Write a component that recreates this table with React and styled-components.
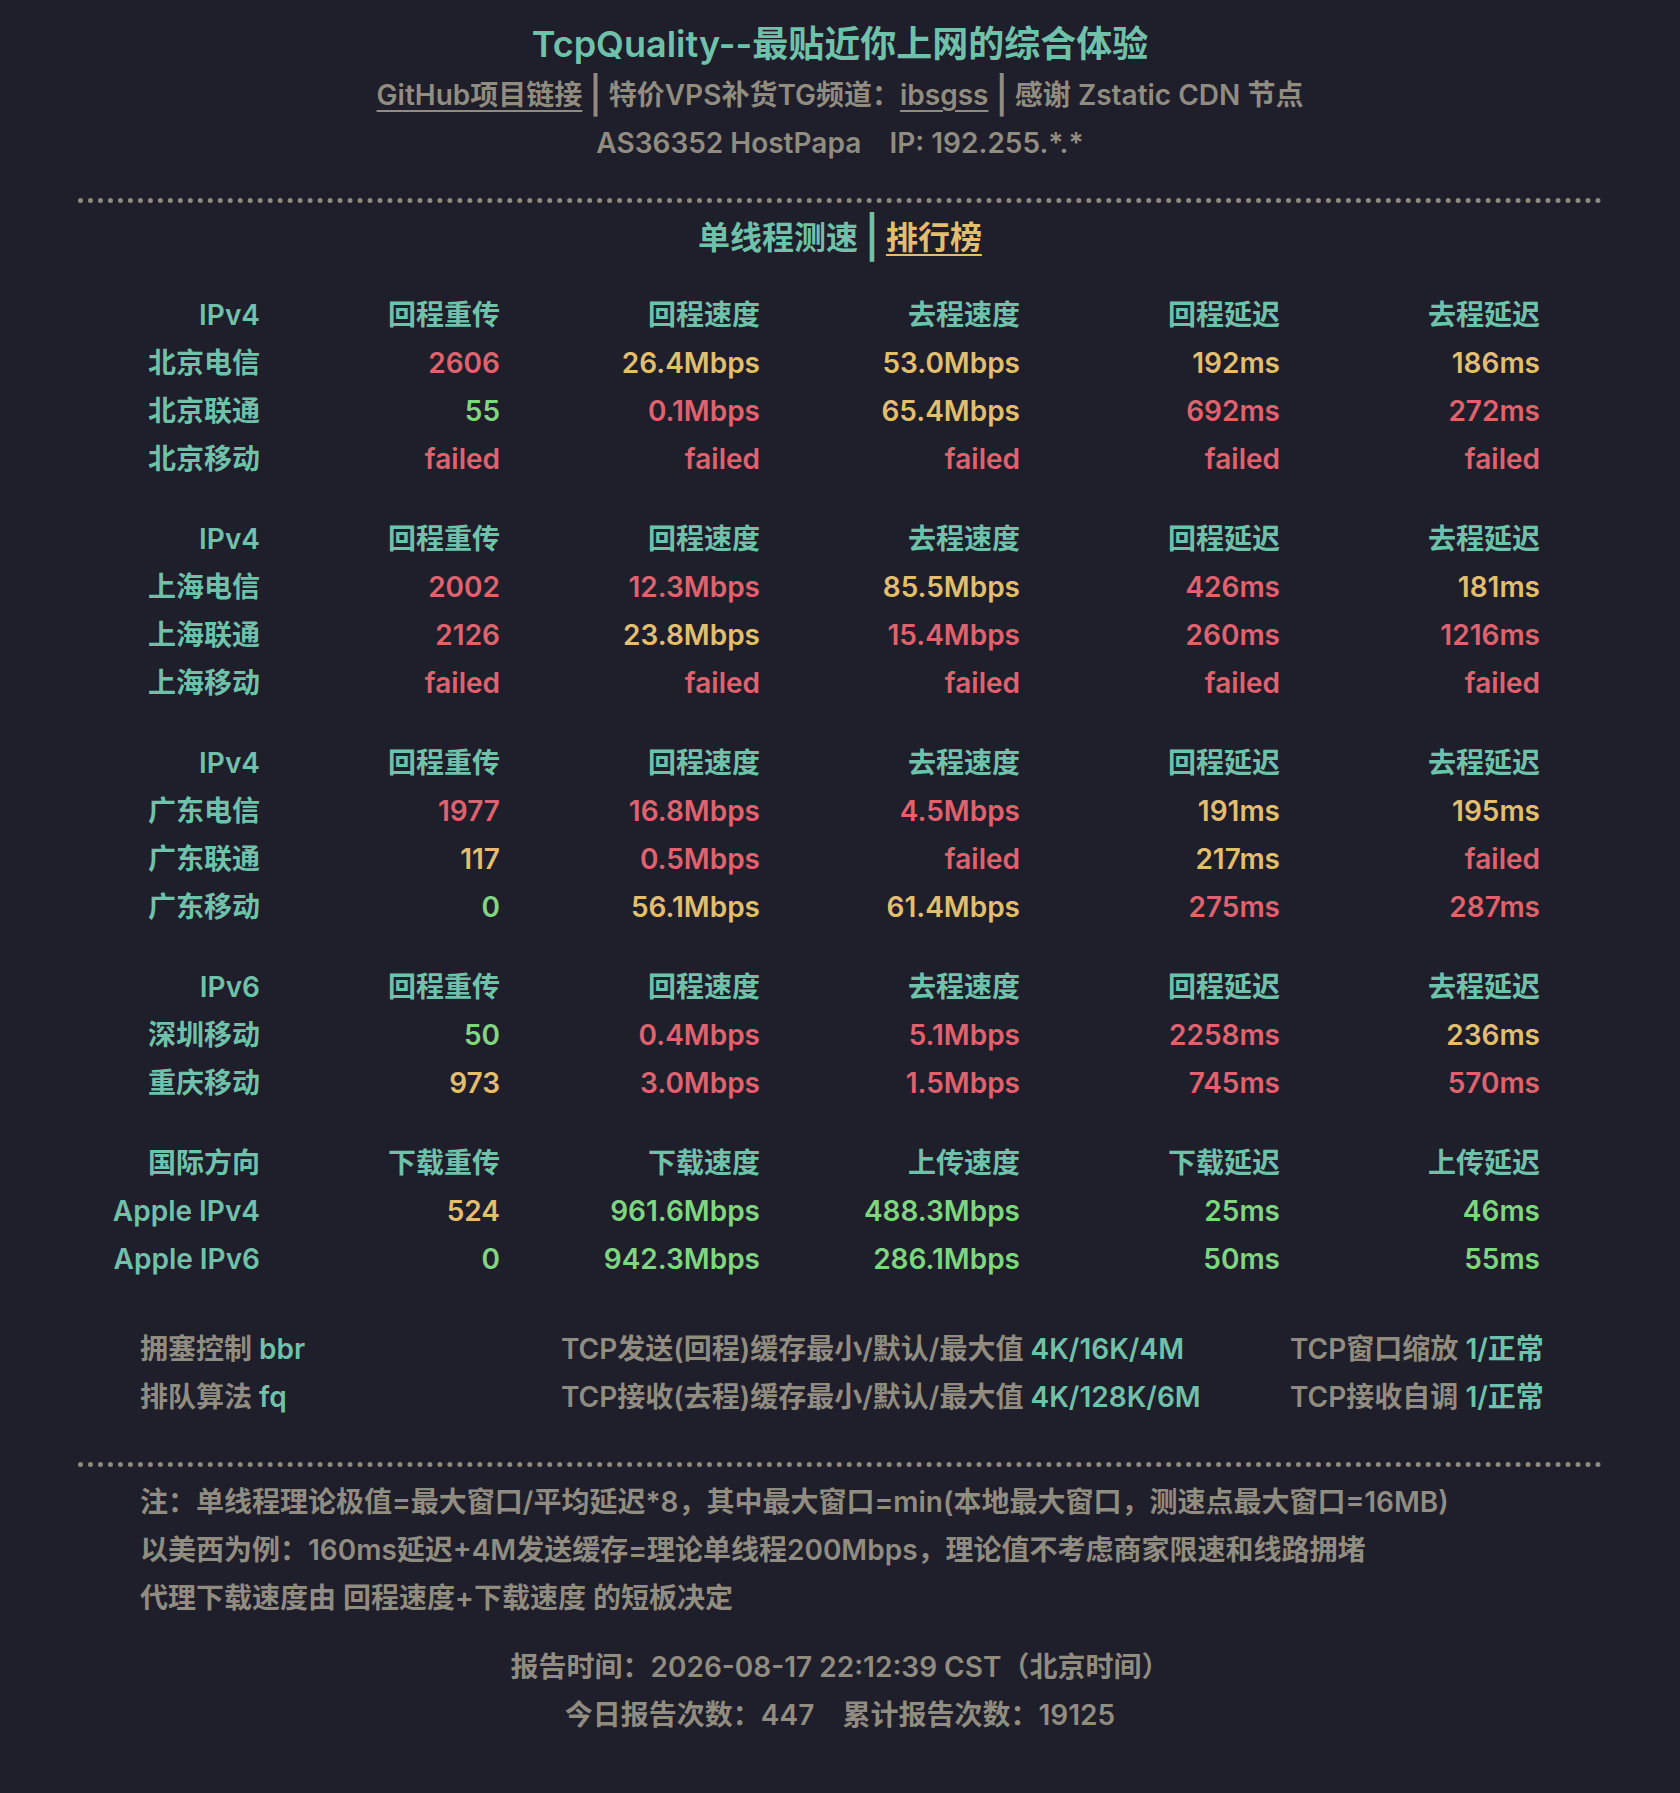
import React from 'react'
import styled, {createGlobalStyle} from 'styled-components'

const teal = '#6fc2a9'
const gray = '#918c80'
const yellow = '#e2be6e'
const red = '#e0626e'
const green = '#80d680'

const colors = {t: teal, y: yellow, r: red, g: green}

const GlobalStyle = createGlobalStyle`
    html {
        background: #9c9c9c;
    }
    body {
        margin: 0;
        font-family: "Inter", "Noto Sans CJK SC", sans-serif;
        font-weight: 600;
    }
`

const sections = [
    {
        head: ['IPv4', '回程重传', '回程速度', '去程速度', '回程延迟', '去程延迟'],
        rows: [
            ['北京电信', ['2606', 'r'], ['26.4Mbps', 'y'], ['53.0Mbps', 'y'], ['192ms', 'y'], ['186ms', 'y']],
            ['北京联通', ['55', 'g'], ['0.1Mbps', 'r'], ['65.4Mbps', 'y'], ['692ms', 'r'], ['272ms', 'r']],
            ['北京移动', ['failed', 'r'], ['failed', 'r'], ['failed', 'r'], ['failed', 'r'], ['failed', 'r']],
        ]
    },
    {
        head: ['IPv4', '回程重传', '回程速度', '去程速度', '回程延迟', '去程延迟'],
        rows: [
            ['上海电信', ['2002', 'r'], ['12.3Mbps', 'r'], ['85.5Mbps', 'y'], ['426ms', 'r'], ['181ms', 'y']],
            ['上海联通', ['2126', 'r'], ['23.8Mbps', 'y'], ['15.4Mbps', 'r'], ['260ms', 'r'], ['1216ms', 'r']],
            ['上海移动', ['failed', 'r'], ['failed', 'r'], ['failed', 'r'], ['failed', 'r'], ['failed', 'r']],
        ]
    },
    {
        head: ['IPv4', '回程重传', '回程速度', '去程速度', '回程延迟', '去程延迟'],
        rows: [
            ['广东电信', ['1977', 'r'], ['16.8Mbps', 'r'], ['4.5Mbps', 'r'], ['191ms', 'y'], ['195ms', 'y']],
            ['广东联通', ['117', 'y'], ['0.5Mbps', 'r'], ['failed', 'r'], ['217ms', 'y'], ['failed', 'r']],
            ['广东移动', ['0', 'g'], ['56.1Mbps', 'y'], ['61.4Mbps', 'y'], ['275ms', 'r'], ['287ms', 'r']],
        ]
    },
    {
        head: ['IPv6', '回程重传', '回程速度', '去程速度', '回程延迟', '去程延迟'],
        rows: [
            ['深圳移动', ['50', 'g'], ['0.4Mbps', 'r'], ['5.1Mbps', 'r'], ['2258ms', 'r'], ['236ms', 'y']],
            ['重庆移动', ['973', 'y'], ['3.0Mbps', 'r'], ['1.5Mbps', 'r'], ['745ms', 'r'], ['570ms', 'r']],
        ]
    },
    {
        head: ['国际方向', '下载重传', '下载速度', '上传速度', '下载延迟', '上传延迟'],
        rows: [
            ['Apple IPv4', ['524', 'y'], ['961.6Mbps', 'g'], ['488.3Mbps', 'g'], ['25ms', 'g'], ['46ms', 'g']],
            ['Apple IPv6', ['0', 'g'], ['942.3Mbps', 'g'], ['286.1Mbps', 'g'], ['50ms', 'g'], ['55ms', 'g']],
        ]
    },
]

const configs = [
    [['拥塞控制', 'bbr'], ['TCP发送(回程)缓存最小/默认/最大值', '4K/16K/4M'], ['TCP窗口缩放', '1/正常']],
    [['排队算法', 'fq'], ['TCP接收(去程)缓存最小/默认/最大值', '4K/128K/6M'], ['TCP接收自调', '1/正常']],
]

const notes = [
    '注：单线程理论极值=最大窗口/平均延迟*8，其中最大窗口=min(本地最大窗口，测速点最大窗口=16MB)',
    '以美西为例：160ms延迟+4M发送缓存=理论单线程200Mbps，理论值不考虑商家限速和线路拥堵',
    '代理下载速度由 回程速度+下载速度 的短板决定',
]

const App = () => {
    return (
        <Page>
            <GlobalStyle/>
            <Title>TcpQuality--最贴近你上网的综合体验</Title>
            <InfoLine>
                <Link>GitHub项目链接</Link>
                <Bar>|</Bar>特价VPS补货TG频道：<Link>ibsgss</Link>
                <Bar>|</Bar>感谢 Zstatic CDN 节点
            </InfoLine>
            <InfoLine>AS36352 HostPapa&nbsp;&nbsp;&nbsp;&nbsp;IP: 192.255.*.*</InfoLine>

            <Divider/>

            <TabLine>
                单线程测速<Bar $color={teal}>|</Bar><Link $color={yellow}>排行榜</Link>
            </TabLine>

            <Table>
                {sections.map((section, i) => (
                    <Section key={i}>
                        {section.head.map((h, j) => <Cell key={j} $color={teal}>{h}</Cell>)}
                        {section.rows.map(row => (
                            <React.Fragment key={row[0]}>
                                <Cell $color={teal}>{row[0]}</Cell>
                                {row.slice(1).map(([v, c], k) => <Cell key={k} $color={colors[c]}>{v}</Cell>)}
                            </React.Fragment>
                        ))}
                    </Section>
                ))}
            </Table>

            <Config>
                {configs.map((line, i) => line.map(([label, value], j) => (
                    <ConfigItem key={`${i}-${j}`}>
                        {label} <Value>{value}</Value>
                    </ConfigItem>
                )))}
            </Config>

            <Divider $gap={41}/>

            <Notes>
                {notes.map(n => <div key={n}>{n}</div>)}
            </Notes>

            <Footer>
                <div>报告时间：2026-08-17 22:12:39 CST（北京时间）</div>
                <div>今日报告次数：447&nbsp;&nbsp;&nbsp;&nbsp;累计报告次数：19125</div>
            </Footer>
        </Page>
    )
}

const Page = styled.div`
    background-color: #1f1e2b;
    color: ${gray};
    font-size: 28px;
    line-height: 48px;
    padding: 18px 0 54px;
    margin-bottom: 2px;
`

const Title = styled.h1`
    margin: 0 0 1px;
    text-align: center;
    font-size: 36px;
    line-height: 52px;
    font-weight: 600;
    color: ${teal};
`

const InfoLine = styled.div`
    text-align: center;
`

const Link = styled.span`
    color: ${props => props.$color || gray};
    text-decoration: underline;
    text-decoration-thickness: 2px;
    text-underline-offset: 5px;
`

const Bar = styled.span`
    display: inline-block;
    color: ${props => props.$color || gray};
    font-weight: 700;
    margin: 0 8px;
    transform: scaleY(1.3);
`

const Divider = styled.div`
    margin: ${props => props.$gap || 31}px 78px 0;
    border-top: 5px dotted #8e8a7e;
`

const TabLine = styled.div`
    margin-top: 11px;
    text-align: center;
    font-size: 32px;
    color: ${teal};
`

const Table = styled.div`
    margin: 29px 0 0 100px;
    display: flex;
    flex-direction: column;
    gap: 32px;
`

const Section = styled.div`
    display: grid;
    grid-template-columns: 160px 240px 260px 260px 260px 260px;
`

const Cell = styled.div`
    text-align: right;
    white-space: nowrap;
    color: ${props => props.$color};
`

const Config = styled.div`
    margin: 42px 0 0 140px;
    display: grid;
    grid-template-columns: 421px 729px auto;
`

const ConfigItem = styled.div`
    white-space: nowrap;
`

const Value = styled.span`
    color: ${teal};
`

const Notes = styled.div`
    margin: 11px 0 0 140px;
`

const Footer = styled.div`
    margin-top: 21px;
    text-align: center;
`

export default App
